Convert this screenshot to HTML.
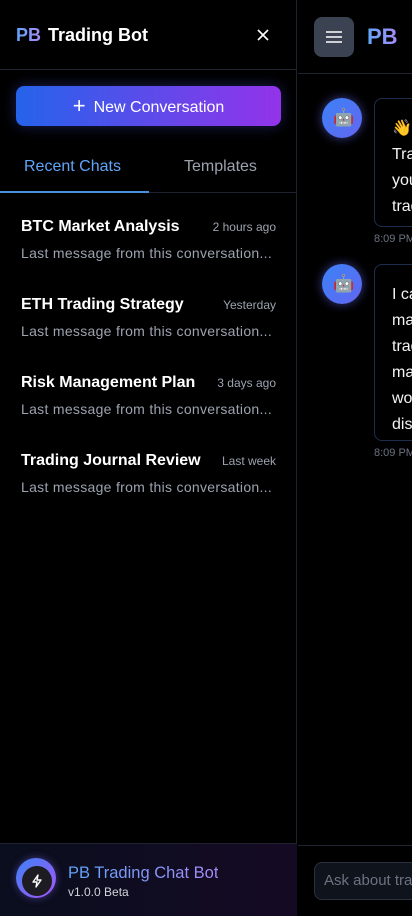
<!DOCTYPE html>
<html><head><meta charset="utf-8"><style>
*{margin:0;padding:0;box-sizing:border-box}
body{width:412px;height:916px;background:#000;font-family:"Liberation Sans",sans-serif;overflow:hidden;position:relative;color:#fff}
.side{position:absolute;left:0;top:0;width:297px;height:916px;border-right:1px solid #1f2330;background:#000;z-index:2}
.hdr{height:70px;border-bottom:1px solid #1f2330;position:relative}
.grad{background:linear-gradient(90deg,#60a5fa,#a78bfa);-webkit-background-clip:text;background-clip:text;color:transparent}
.btn{position:absolute;left:16px;top:86px;width:265px;height:40px;border-radius:8px;background:linear-gradient(90deg,#2563eb,#9333ea);box-shadow:0 0 14px rgba(80,90,240,.35);text-align:center;font-size:16px;line-height:40px;color:#fff}
.tabs{position:absolute;top:140px;left:0;width:297px;height:53px;border-bottom:1px solid #1f2330}
.tab{position:absolute;top:18px;font-size:16px}
.item{position:absolute;left:21px;width:255px}
.item b{font-size:16px;color:#fff}
.item .t{position:absolute;right:0;top:2px;font-size:12px;color:#9ca3af}
.item .s{font-size:14px;color:#9ca3af;margin-top:9px;white-space:nowrap;letter-spacing:.3px}
.foot{position:absolute;left:0;top:843px;width:297px;height:73px;border-top:1px solid #1f2330;background:linear-gradient(90deg,#0a0e1e,#150a24)}
.main{position:absolute;left:298px;top:0;width:114px;height:916px;overflow:hidden}
.av{position:absolute;left:24px;width:40px;height:40px;border-radius:50%;background:linear-gradient(135deg,#3b82f6,#6366f1);box-shadow:0 0 10px rgba(99,102,241,.6)}
.bub{position:absolute;left:76px;width:80px;border:1px solid #1e2d4d;border-radius:8px;padding:0 0 0 17px;font-size:16px;line-height:26px;color:#f3f4f6;white-space:nowrap;overflow:hidden}
.tm{position:absolute;left:76px;font-size:11px;color:#6b7280;white-space:nowrap}
</style></head><body>
<div class="side">
 <div class="hdr">
  <div style="position:absolute;left:16px;top:25px;font-size:18px;font-weight:bold"><span class="grad">PB</span> <span style="margin-left:2px">Trading Bot</span></div>
  <svg style="position:absolute;left:256px;top:28px" width="14" height="14" viewBox="0 0 14 14"><path d="M2 2L12 12M12 2L2 12" stroke="#fff" stroke-width="1.6"/></svg>
 </div>
 <div class="btn"><span style="font-size:22px;font-weight:300;vertical-align:-1px;margin-right:8px">+</span>New Conversation</div>
 <div class="tabs">
  <div class="tab" style="left:24px;color:#60a5fa">Recent Chats</div>
  <div class="tab" style="left:184px;color:#9ca3af">Templates</div>
  <div style="position:absolute;left:0;bottom:-1px;width:149px;height:2px;background:#4a90e2"></div>
 </div>
 <div class="item" style="top:218px"><b>BTC Market Analysis</b><span class="t">2 hours ago</span><div class="s">Last message from this conversation...</div></div>
 <div class="item" style="top:296px"><b>ETH Trading Strategy</b><span class="t">Yesterday</span><div class="s">Last message from this conversation...</div></div>
 <div class="item" style="top:374px"><b>Risk Management Plan</b><span class="t">3 days ago</span><div class="s">Last message from this conversation...</div></div>
 <div class="item" style="top:452px"><b>Trading Journal Review</b><span class="t">Last week</span><div class="s">Last message from this conversation...</div></div>
 <div class="foot">
  <div style="position:absolute;left:16px;top:14px;width:40px;height:40px;border-radius:50%;background:linear-gradient(135deg,#3b82f6,#a855f7);box-shadow:0 0 8px rgba(120,100,240,.5)"></div>
  <div style="position:absolute;left:22px;top:22px;width:30px;height:30px;border-radius:50%;background:#1c1c22"></div>
  <svg style="position:absolute;left:29px;top:29px" width="16" height="16" viewBox="0 0 16 16"><path d="M9 2L4 9H8L7 14L12 7H8Z" fill="none" stroke="#fff" stroke-width="1.4" stroke-linejoin="round"/></svg>
  <div style="position:absolute;left:68px;top:20px;font-size:16.5px" class="grad">PB Trading Chat Bot</div>
  <div style="position:absolute;left:68px;top:41px;font-size:12px;color:#d1d5db">v1.0.0 Beta</div>
 </div>
</div>
<div class="main">
 <div style="position:absolute;left:0;top:0;width:114px;height:74px;border-bottom:1px solid #1f2330"></div>
 <div style="position:absolute;left:16px;top:17px;width:40px;height:40px;border-radius:8px;background:#3b4252"></div>
 <svg style="position:absolute;left:27px;top:30px" width="18" height="14" viewBox="0 0 18 14"><path d="M1 2H17M1 7H17M1 12H17" stroke="#fff" stroke-width="1.6"/></svg>
 <div style="position:absolute;left:69px;top:24px;font-size:22px;font-weight:bold" class="grad">PB</div>
 <div class="av" style="top:98px"></div><div style="position:absolute;left:35px;top:108px;font-size:17px">🤖</div>
 <div class="bub" style="top:98px;height:129px;padding-top:17px">👋<br>Trading<br>your<br>trading</div>
 <div class="tm" style="top:233px">8:09 PM</div>
 <div class="av" style="top:264px"></div><div style="position:absolute;left:35px;top:274px;font-size:17px">🤖</div>
 <div class="bub" style="top:264px;height:177px;padding-top:17px">I can<br>market<br>trading<br>make<br>would<br>discuss</div>
 <div class="tm" style="top:447px">8:09 PM</div>
 <div style="position:absolute;left:0;top:845px;width:114px;height:1px;background:#1f2330"></div>
 <div style="position:absolute;left:16px;top:862px;width:120px;height:38px;border-radius:8px;background:#0f131c;border:1px solid #2a303c;font-size:15px;color:#6b7280;line-height:36px;padding-left:9px;white-space:nowrap">Ask about trading</div>
</div>
</body></html>
